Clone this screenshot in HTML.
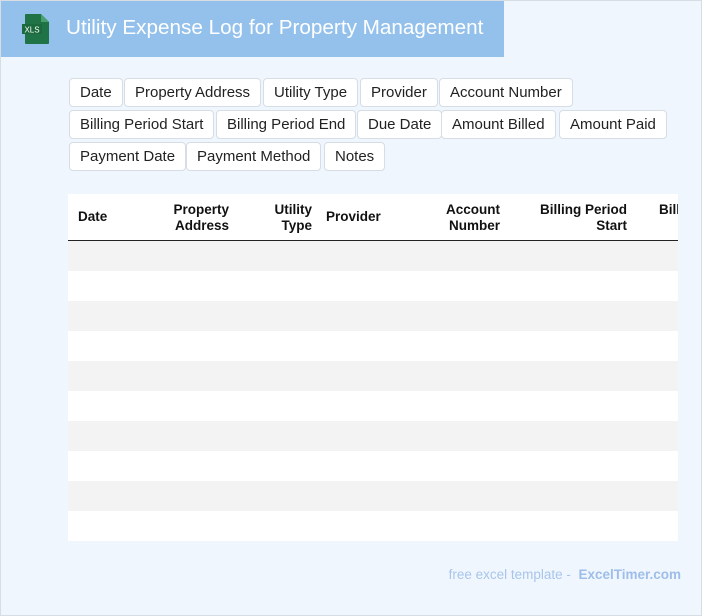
<!DOCTYPE html>
<html><head><style>
*{margin:0;padding:0;box-sizing:border-box}
body{width:702px;height:616px;background:#f0f6fe;font-family:"Liberation Sans",Arial,sans-serif;position:relative;overflow:hidden;box-shadow:inset 0 0 0 1px #d8dde3}
.hdr{position:absolute;left:1px;top:1px;width:503px;height:56px;background:#93c1ec}
.hdr h1{position:absolute;left:65px;top:15px;font-size:20.7px;font-weight:normal;color:#fff}
.tag{position:absolute;height:29px;border:1px solid #d6dde5;border-radius:4px;background:#fff;font-size:15px;color:#222;line-height:27px;padding:0 10px;white-space:nowrap}
.tbl{position:absolute;left:68px;top:194px;width:610px;height:347px;background:#fff;overflow:hidden}
.th{position:absolute;font-size:13.5px;font-weight:bold;color:#111;line-height:16px}
.line{position:absolute;left:0;top:46px;width:610px;height:1px;background:#222}
.row{position:absolute;left:0;width:610px;height:30px;background:#f3f3f3}
.foot{position:absolute;right:21px;top:567px;font-size:13.5px;color:#a9c5ea}
.foot b{color:#9ebee9}
</style></head><body>
<div class="hdr">
<svg style="position:absolute;left:20px;top:12px" width="30" height="32" viewBox="0 0 30 32"><path d="M5 1h15l8 8v21a1 1 0 0 1-1 1H5a1 1 0 0 1-1-1V2a1 1 0 0 1 1-1z" fill="#1f7346"/><path d="M20 1v8h8z" fill="#4aa06c"/><rect x="1" y="11" width="20" height="10" fill="#1a6a3e"/><text x="11" y="19.5" font-size="8" fill="#fff" text-anchor="middle" font-family="Liberation Sans">XLS</text></svg>
<h1>Utility Expense Log for Property Management</h1>
</div>
<div class="tag" style="left:69px;top:78px">Date</div>
<div class="tag" style="left:124px;top:78px">Property Address</div>
<div class="tag" style="left:263px;top:78px">Utility Type</div>
<div class="tag" style="left:360px;top:78px">Provider</div>
<div class="tag" style="left:439px;top:78px">Account Number</div>
<div class="tag" style="left:69px;top:110px">Billing Period Start</div>
<div class="tag" style="left:216px;top:110px">Billing Period End</div>
<div class="tag" style="left:357px;top:110px">Due Date</div>
<div class="tag" style="left:441px;top:110px">Amount Billed</div>
<div class="tag" style="left:559px;top:110px">Amount Paid</div>
<div class="tag" style="left:69px;top:142px">Payment Date</div>
<div class="tag" style="left:186px;top:142px">Payment Method</div>
<div class="tag" style="left:324px;top:142px">Notes</div>
<div class="tbl">
<div class="th" style="left:10px;top:15px">Date</div>
<div class="th" style="left:80px;top:8px;width:81px;text-align:right">Property<br>Address</div>
<div class="th" style="left:190px;top:8px;width:54px;text-align:right">Utility<br>Type</div>
<div class="th" style="left:258px;top:15px">Provider</div>
<div class="th" style="left:350px;top:8px;width:82px;text-align:right">Account<br>Number</div>
<div class="th" style="left:450px;top:8px;width:109px;text-align:right">Billing Period<br>Start</div>
<div class="th" style="left:591px;top:8px">Billing</div>
<div class="line"></div>
<div class="row" style="top:47px"></div>
<div class="row" style="top:107px"></div>
<div class="row" style="top:167px"></div>
<div class="row" style="top:227px"></div>
<div class="row" style="top:287px"></div>
</div>
<div class="foot">free excel template - &nbsp;<b>ExcelTimer.com</b></div>
</body></html>
